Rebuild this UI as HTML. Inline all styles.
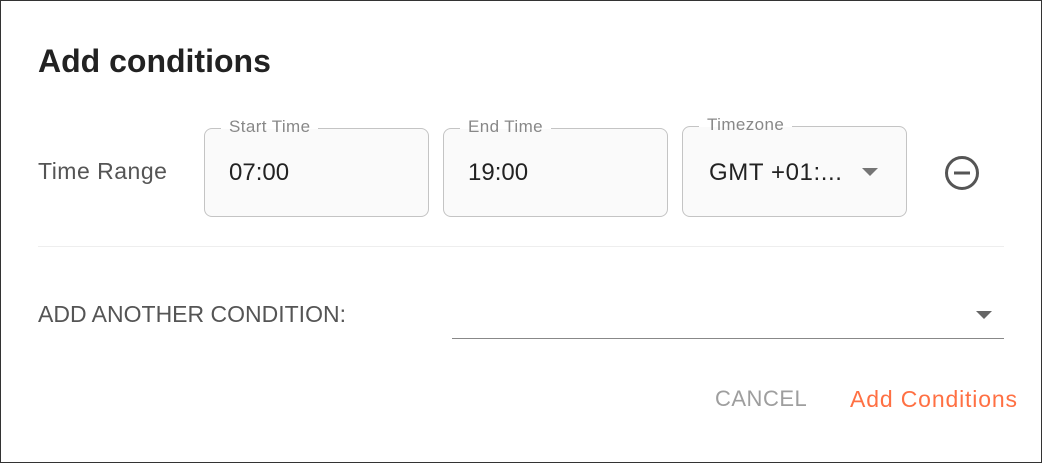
<!DOCTYPE html>
<html><head><style>
body{margin:0;width:1042px;height:463px;background:#fff;font-family:"Liberation Sans",sans-serif;overflow:hidden}
.frame{position:absolute;left:0;top:0;width:1040px;height:461px;border:1px solid #333}
.a{position:absolute;white-space:nowrap}
.box{position:absolute;border:1px solid #c4c4c4;border-radius:8px;background:#fafafa;box-sizing:border-box}
.lbl{position:absolute;top:-12px;left:16px;padding:0 8px;font-size:17px;letter-spacing:0.4px;color:#888;line-height:20px;background:linear-gradient(#fff 60%,#fafafa 60%)}
.val{position:absolute;left:24px;top:30px;font-size:24px;color:#222;line-height:28px}
</style></head><body>
<div class="frame"></div>
<div class="a" style="left:38px;top:43px;font-size:32px;font-weight:bold;color:#222">Add conditions</div>
<div class="a" style="left:38px;top:158px;font-size:23px;letter-spacing:0.5px;color:#555">Time Range</div>
<div class="box" style="left:204px;top:128px;width:225px;height:89px"><div class="lbl">Start Time</div><div class="val">07:00</div></div>
<div class="box" style="left:443px;top:128px;width:225px;height:89px"><div class="lbl">End Time</div><div class="val">19:00</div></div>
<div class="box" style="left:682px;top:126px;width:225px;height:91px"><div class="lbl">Timezone</div><div class="val" style="left:26px;top:32px;letter-spacing:0.6px">GMT +01:...</div>
<svg class="a" style="left:178px;top:40px" width="18" height="10"><path d="M1 1h16l-8 8z" fill="#757575"/></svg></div>
<svg class="a" style="left:944px;top:155px" width="36" height="36"><circle cx="18" cy="18" r="15.5" fill="none" stroke="#555" stroke-width="3"/><rect x="10" y="16.5" width="16" height="3" fill="#555"/></svg>
<div class="a" style="left:38px;top:246px;width:966px;height:1px;background:#eee"></div>
<div class="a" style="left:38px;top:301px;font-size:23px;color:#555">ADD ANOTHER CONDITION:</div>
<div class="a" style="left:452px;top:338px;width:552px;height:1px;background:#888"></div>
<svg class="a" style="left:975px;top:310px" width="18" height="10"><path d="M1 1h16l-8 8z" fill="#666"/></svg>
<div class="a" style="left:715px;top:386px;font-size:22px;letter-spacing:0.5px;color:#9e9e9e">CANCEL</div>
<div class="a" style="left:850px;top:386px;font-size:23px;letter-spacing:0.85px;color:#ff7043">Add Conditions</div>
</body></html>
